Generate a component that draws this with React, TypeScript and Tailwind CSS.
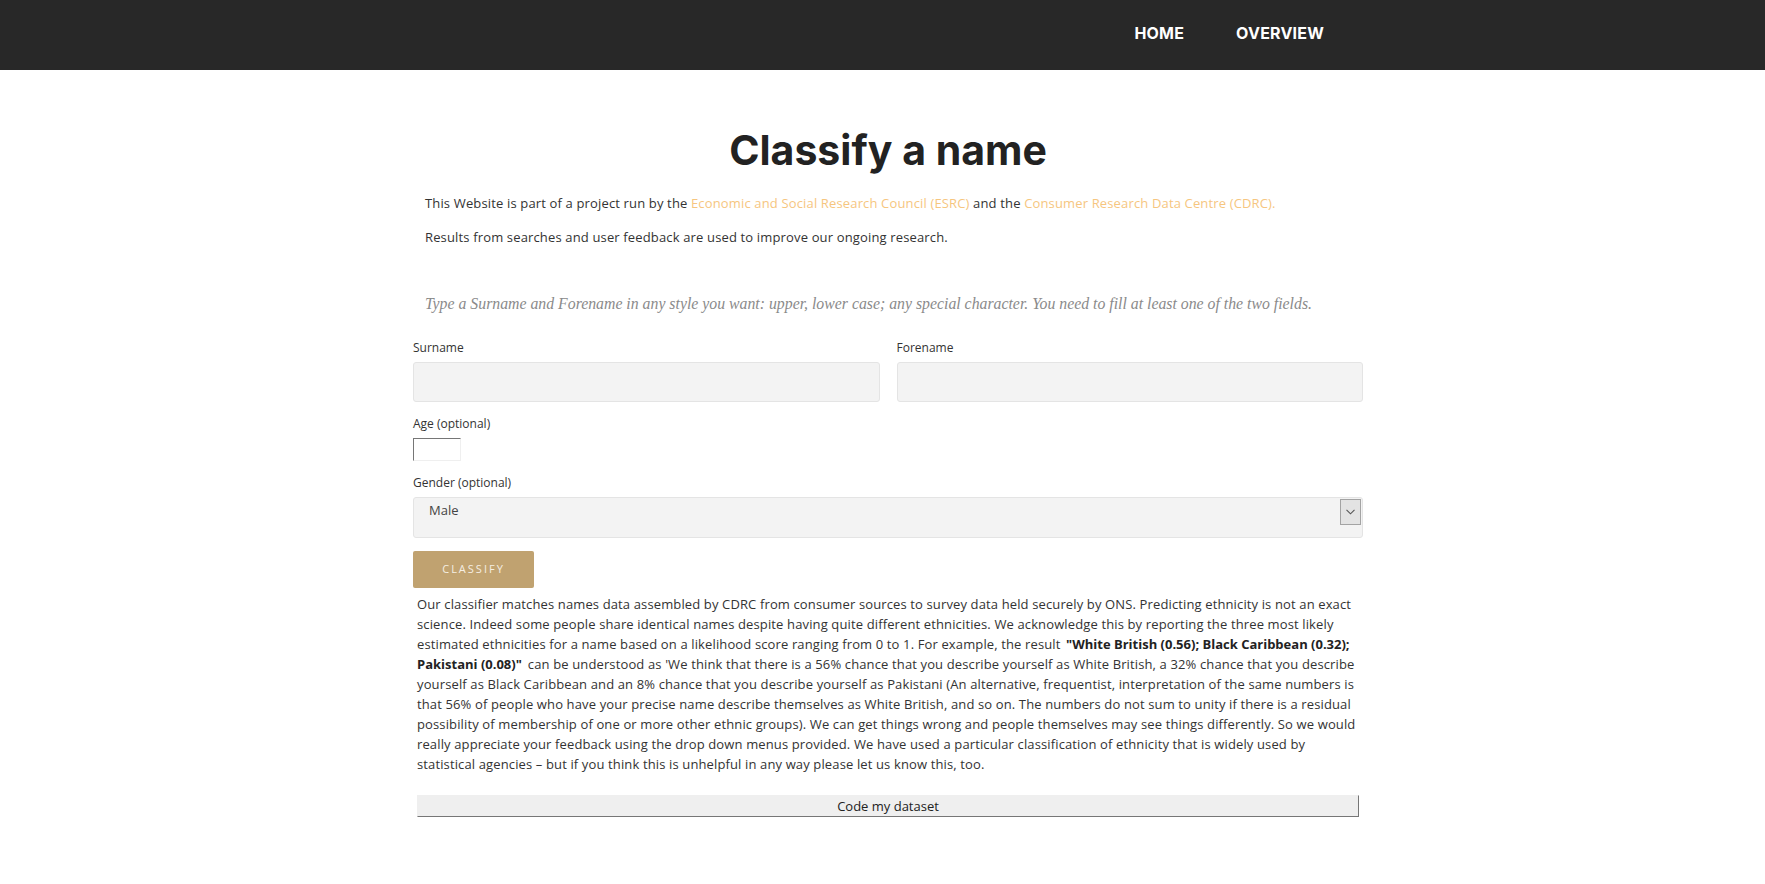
import React from "react";

const sans = { fontFamily: "'Open Sans', Lato, sans-serif" };

export default function App() {
  return (
    <div className="min-h-[884px] bg-white text-[#333]" style={sans}>
      <nav className="h-[70px] bg-[#282828] flex items-center justify-end pr-[441px] gap-[52px] pb-[4px]">
        <a className="text-white font-bold text-[16px] tracking-[0.2px]" style={{ fontFamily: "Inter, sans-serif" }}>HOME</a>
        <a className="text-white font-bold text-[16px] tracking-[0.2px]" style={{ fontFamily: "Inter, sans-serif" }}>OVERVIEW</a>
      </nav>
      <div className="flex justify-center pl-[11px]">
        <div className="w-[950px] flex flex-col">
          <h1
            className="mt-[55px] text-center text-[41px] leading-[50px] font-bold text-[#222]"
            style={{ fontFamily: "Inter, sans-serif" }}
          >
            Classify a name
          </h1>
          <p className="mt-[18px] pl-[12px] text-[13px] leading-[20px] tracking-[0.15px] text-[#333]">
            This Website is part of a project run by the{" "}
            <a className="text-[#f6c67f]">Economic and Social Research Council (ESRC)</a> and the{" "}
            <a className="text-[#f6c67f]">Consumer Research Data Centre (CDRC).</a>
          </p>
          <p className="mt-[14px] pl-[12px] text-[13px] leading-[20px] tracking-[0.15px] text-[#333]">
            Results from searches and user feedback are used to improve our ongoing research.
          </p>
          <p
            className="mt-[47px] pl-[12px] text-[15.8px] leading-[20px] italic text-[#8a8a8a] whitespace-nowrap"
            style={{ fontFamily: "'Liberation Serif', serif" }}
          >
            Type a Surname and Forename in any style you want: upper, lower case; any special character. You need to fill at least one of the two fields.
          </p>
          <div className="mt-[26px] grid grid-cols-2 gap-x-[17px]">
            <div className="flex flex-col">
              <label className="text-[12px] leading-[16px] text-[#333]">Surname</label>
              <div className="mt-[6px] h-[40px] bg-[#f3f3f3] border border-[#e4e4e4] rounded-[3px]" />
            </div>
            <div className="flex flex-col">
              <label className="text-[12px] leading-[16px] text-[#333]">Forename</label>
              <div className="mt-[6px] h-[40px] bg-[#f3f3f3] border border-[#e4e4e4] rounded-[3px]" />
            </div>
          </div>
          <label className="mt-[14px] text-[12px] leading-[16px] text-[#333]">Age (optional)</label>
          <div className="mt-[6px] w-[48px] h-[23px] bg-white border border-t-[#767676] border-l-[#767676] border-r-[#efefef] border-b-[#efefef]" />
          <label className="mt-[14px] text-[12px] leading-[16px] text-[#333]">Gender (optional)</label>
          <div className="mt-[6px] h-[41px] bg-[#f3f3f3] border border-[#e4e4e4] rounded-[3px] flex justify-between items-start pt-px pr-px">
            <span className="pl-[15px] pt-[1px] text-[13px] leading-[20px] text-[#444]">Male</span>
            <span className="w-[21px] h-[26px] bg-[#e3e3e3] border border-[#a3a3a3] flex items-center justify-center">
              <svg width="9" height="6" viewBox="0 0 9 6">
                <path d="M0.5 0.8 L4.5 4.8 L8.5 0.8" fill="none" stroke="#555" strokeWidth="1.1" />
              </svg>
            </span>
          </div>
          <button className="mt-[13px] w-[121px] h-[37px] bg-[#c0a270] rounded-[2px] text-[#f5eee2] text-[11px] tracking-[2px] flex items-center justify-center">
            CLASSIFY
          </button>
          <div className="mt-[6px] pl-[4px] text-[13px] leading-[20px] tracking-[0.13px] text-[#333]">
            <div className="whitespace-nowrap">Our classifier matches names data assembled by CDRC from consumer sources to survey data held securely by ONS. Predicting ethnicity is not an exact</div>
            <div className="whitespace-nowrap">science. Indeed some people share identical names despite having quite different ethnicities. We acknowledge this by reporting the three most likely</div>
            <div className="whitespace-nowrap">
              estimated ethnicities for a name based on a likelihood score ranging from 0 to 1. For example, the result{" "}
              <b className="ml-[2px] text-[#222] tracking-normal">"White British (0.56); Black Caribbean (0.32);</b>
            </div>
            <div className="whitespace-nowrap">
              <b className="text-[#222] tracking-normal">Pakistani (0.08)"</b>
              <span className="ml-[6px]">can be understood as 'We think that there is a 56% chance that you describe yourself as White British, a 32% chance that you describe</span>
            </div>
            <div className="whitespace-nowrap">yourself as Black Caribbean and an 8% chance that you describe yourself as Pakistani (An alternative, frequentist, interpretation of the same numbers is</div>
            <div className="whitespace-nowrap">that 56% of people who have your precise name describe themselves as White British, and so on. The numbers do not sum to unity if there is a residual</div>
            <div className="whitespace-nowrap">possibility of membership of one or more other ethnic groups). We can get things wrong and people themselves may see things differently. So we would</div>
            <div className="whitespace-nowrap">really appreciate your feedback using the drop down menus provided. We have used a particular classification of ethnicity that is widely used by</div>
            <div className="whitespace-nowrap">statistical agencies – but if you think this is unhelpful in any way please let us know this, too.</div>
          </div>
          <button className="mt-[21px] ml-[4px] w-[942px] h-[22px] bg-[#efefef] border border-t-[#efefef] border-l-[#efefef] border-r-[#767676] border-b-[#767676] text-[13px] leading-[20px] text-[#222]">
            Code my dataset
          </button>
        </div>
      </div>
    </div>
  );
}
